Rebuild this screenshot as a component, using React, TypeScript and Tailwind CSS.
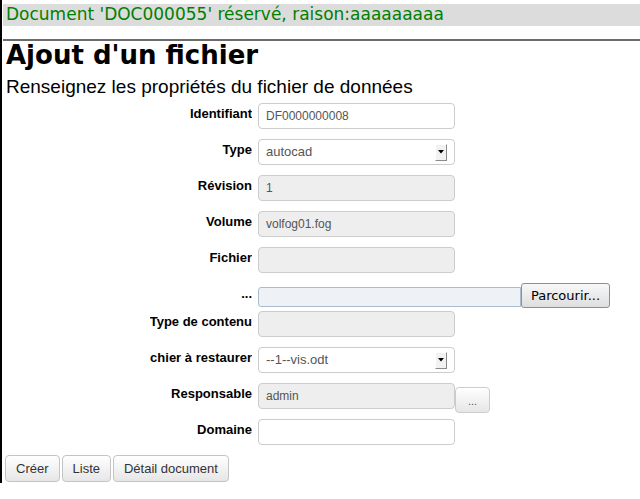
import React from "react";

const labelCls =
  "w-[102px] shrink-0 flex justify-end overflow-hidden whitespace-nowrap font-bold text-[13px] leading-[15px] text-black mr-[6px]";
const inputBase =
  "h-[26px] w-[197px] border border-[#cccccc] rounded-[4px] px-[7px] flex items-center text-[12px] text-[#555555] shrink-0";

function Label({ children, pt }: { children: React.ReactNode; pt?: string }) {
  return (
    <div className={labelCls + " " + (pt ? pt : "pt-[3px]")}>
      <span>{children}</span>
    </div>
  );
}

function Input({ value, disabled }: { value?: string; disabled?: boolean }) {
  return (
    <div className={inputBase + (disabled ? " bg-[#eeeeee]" : " bg-white")}>{value}</div>
  );
}

function Select({ value }: { value: string }) {
  return (
    <div className="h-[26px] w-[197px] border border-[#cccccc] rounded-[4px] bg-white flex items-center justify-between pl-[7px] pr-[7px] text-[13px] text-[#555555] shrink-0">
      <span>{value}</span>
      <span className="w-[12px] h-[17px] bg-[#f2f2f2] border-r border-b border-[#8a8a8a] border-l border-t border-l-[#ffffff] border-t-[#ffffff] flex items-center justify-center">
        <svg width="6" height="4" viewBox="0 0 6 4">
          <path d="M0 0 L6 0 L3 3.5 Z" fill="#000" />
        </svg>
      </span>
    </div>
  );
}

export default function App() {
  return (
    <div
      className="bg-white w-[640px] h-[499px] overflow-hidden"
      style={{ fontFamily: '"Liberation Sans", Arial, sans-serif' }}
    >
      <div className="border-l-2 border-black pb-[1px]">
        <div className="ml-[1px] pt-[4px]">
          <div
            className="h-[22px] bg-[#dcdcdc] flex items-center pl-[3px] text-[17px] text-[#008000] whitespace-nowrap"
            style={{ fontFamily: '"DejaVu Sans", sans-serif' }}
          >
            Document 'DOC000055' réservé, raison:aaaaaaaaa
          </div>
          <div className="mt-[13px] h-[2px] bg-[#6a6a6a]" />
          <div
            className="pl-[3px] text-[26px] leading-[29px] font-bold text-black whitespace-nowrap"
            style={{ fontFamily: '"DejaVu Sans", sans-serif' }}
          >
            Ajout d'un fichier
          </div>
          <div className="pl-[3px] mt-[6px] text-[19px] leading-[22px] text-black whitespace-nowrap">
            Renseignez les propriétés du fichier de données
          </div>
        </div>

        <div className="pl-[148px] mt-[5px]">
          <div className="flex items-start mb-[10px]">
            <Label>Identifiant</Label>
            <Input value="DF0000000008" />
          </div>
          <div className="flex items-start mb-[10px]">
            <Label>Type</Label>
            <Select value="autocad" />
          </div>
          <div className="flex items-start mb-[10px]">
            <Label>Révision</Label>
            <Input value="1" disabled />
          </div>
          <div className="flex items-start mb-[10px]">
            <Label>Volume</Label>
            <Input value="volfog01.fog" disabled />
          </div>
          <div className="flex items-start mb-[10px]">
            <Label>Fichier</Label>
            <Input disabled />
          </div>
          <div className="flex items-start mb-[3px]">
            <Label pt="pt-[3px]">...</Label>
            <div className="mt-[4px] h-[20px] w-[263px] shrink-0 bg-[#eef2f7] border border-[#a9bcce] rounded-l-[3px]" />
            <div
              className="h-[25px] w-[89px] shrink-0 rounded-[3px] border border-[#8f8f8f] bg-gradient-to-b from-[#f8f8f8] to-[#dedede] flex items-center justify-center text-[13px] text-black"
              style={{ fontFamily: '"DejaVu Sans", sans-serif' }}
            >
              Parcourir...
            </div>
          </div>
          <div className="flex items-start mb-[10px]">
            <Label>Type de contenu</Label>
            <Input disabled />
          </div>
          <div className="flex items-start mb-[10px]">
            <Label>Fichier à restaurer</Label>
            <Select value="--1--vis.odt" />
          </div>
          <div className="flex items-start mb-[6px]">
            <Label>Responsable</Label>
            <Input value="admin" disabled />
            <div className="mt-[4px] h-[26px] w-[35px] shrink-0 rounded-[4px] border border-[#cccccc] bg-gradient-to-b from-white to-[#e6e6e6] flex items-center justify-center text-[11px] text-[#555555] pt-[3px]">
              ...
            </div>
          </div>
          <div className="flex items-start mb-[10px]">
            <Label>Domaine</Label>
            <Input />
          </div>
        </div>

        <div className="flex items-start gap-[2px] pl-[3px]">
          {["Créer", "Liste", "Détail document"].map((t) => (
            <div
              key={t}
              className="h-[27px] px-[10px] rounded-[4px] border border-[#c4c4c4] bg-gradient-to-b from-white to-[#e6e6e6] flex items-center text-[13px] text-[#333333]"
            >
              {t}
            </div>
          ))}
        </div>
      </div>
    </div>
  );
}
